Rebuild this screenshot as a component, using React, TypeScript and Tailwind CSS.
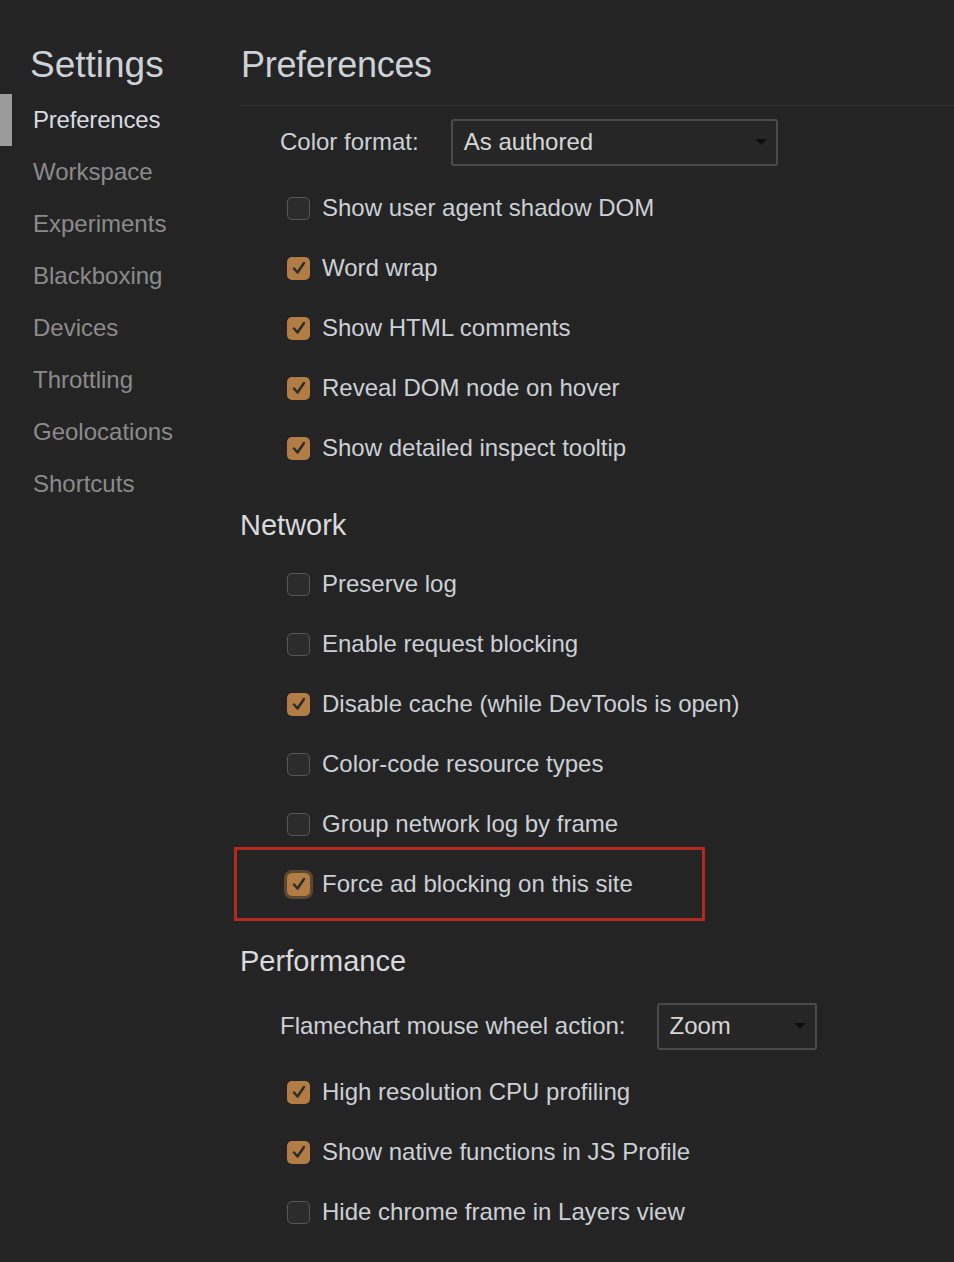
import React from "react";

const FONT = { fontFamily: '"Liberation Sans", Arial, sans-serif' };

function Check({ checked, focused }: { checked: boolean; focused?: boolean }) {
  if (!checked) {
    return (
      <span className="w-[23px] h-[23px] rounded-[5px] border-[1.5px] border-[#575757] bg-[#2c2c2c] shrink-0" />
    );
  }
  return (
    <span
      className={
        focused
          ? "w-[23px] h-[23px] rounded-[5px] bg-[#b27c45] shrink-0 flex items-center justify-center ring-[3px] ring-[#5c4731]"
          : "w-[23px] h-[23px] rounded-[5px] bg-[#b27c45] shrink-0 flex items-center justify-center"
      }
    >
      <svg width="16" height="16" viewBox="0 0 16 16" fill="none">
        <path d="M3 8.5 L6.5 12.5 L13 3" stroke="#2b2b2b" strokeWidth="2.4" strokeLinecap="round" strokeLinejoin="round" />
      </svg>
    </span>
  );
}

function Row({ label, checked, focused }: { label: string; checked?: boolean; focused?: boolean }) {
  return (
    <div className="h-[60px] flex items-center pl-[47px] gap-[12px]">
      <Check checked={!!checked} focused={focused} />
      <span className="text-[24px] text-[#ccd0d6]">{label}</span>
    </div>
  );
}

function Select({ value, width }: { value: string; width: string }) {
  return (
    <div
      className={`${width} h-[47px] rounded-[3px] border-2 border-[#4a4a4a] bg-[#262626] flex items-center justify-between pl-[11px] pr-[9px]`}
    >
      <span className="text-[24px] text-[#d6d6d6]">{value}</span>
      <svg width="12" height="6" viewBox="0 0 12 6">
        <path d="M0 0 L12 0 L6 6 Z" fill="#0e0e0e" />
      </svg>
    </div>
  );
}

function SectionTitle({ children }: { children: React.ReactNode }) {
  return (
    <div className="mt-[20px] h-[56px] flex items-center">
      <span className="text-[29px] text-[#d8dadd]">{children}</span>
    </div>
  );
}

export default function App() {
  const nav = ["Preferences", "Workspace", "Experiments", "Blackboxing", "Devices", "Throttling", "Geolocations", "Shortcuts"];
  return (
    <div className="w-[954px] h-[1262px] bg-[#242424] flex overflow-hidden" style={FONT}>
      <aside className="w-[240px] shrink-0">
        <div className="h-[94px] pl-[30px] pt-[43px]">
          <div className="text-[37px] leading-[44px] text-[#cdd2d8]">Settings</div>
        </div>
        <nav className="flex flex-col">
          {nav.map((n, i) => (
            <div key={n} className="h-[52px] flex items-center">
              <span className={i === 0 ? "w-[12px] h-[52px] bg-[#9b9b9b]" : "w-[12px] h-[52px]"} />
              <span
                className={
                  i === 0
                    ? "pl-[21px] text-[24px] text-[#d8dce1] tracking-[-0.2px]"
                    : "pl-[21px] text-[24px] text-[#8b8b8b]"
                }
              >
                {n}
              </span>
            </div>
          ))}
        </nav>
      </aside>
      <main className="flex-1 flex flex-col">
        <div className="h-[106px] border-b border-[#353535] pt-[43px] pl-[1px]">
          <div className="text-[36px] leading-[44px] text-[#cdd2d8] tracking-[-0.3px]">Preferences</div>
        </div>
        <div className="h-[60px] my-[6px] flex items-center pl-[40px]">
          <span className="text-[24px] text-[#ccd0d6] mr-[32px]">Color format:</span>
          <Select value="As authored" width="w-[327px]" />
        </div>
        <Row label="Show user agent shadow DOM" />
        <Row label="Word wrap" checked />
        <Row label="Show HTML comments" checked />
        <Row label="Reveal DOM node on hover" checked />
        <Row label="Show detailed inspect tooltip" checked />

        <SectionTitle>Network</SectionTitle>
        <Row label="Preserve log" />
        <Row label="Enable request blocking" />
        <Row label="Disable cache (while DevTools is open)" checked />
        <Row label="Color-code resource types" />
        <Row label="Group network log by frame" />
        <div className="relative">
          <Row label="Force ad blocking on this site" checked focused />
          <span className="absolute left-[-6px] top-[-7px] w-[471px] h-[74px] border-[3px] border-[#b3291b] pointer-events-none" />
        </div>

        <SectionTitle>Performance</SectionTitle>
        <div className="h-[60px] my-[6px] flex items-center pl-[40px]">
          <span className="text-[24px] text-[#ccd0d6] mr-[31px]">Flamechart mouse wheel action:</span>
          <Select value="Zoom" width="w-[160px]" />
        </div>
        <Row label="High resolution CPU profiling" checked />
        <Row label="Show native functions in JS Profile" checked />
        <Row label="Hide chrome frame in Layers view" />
      </main>
    </div>
  );
}
